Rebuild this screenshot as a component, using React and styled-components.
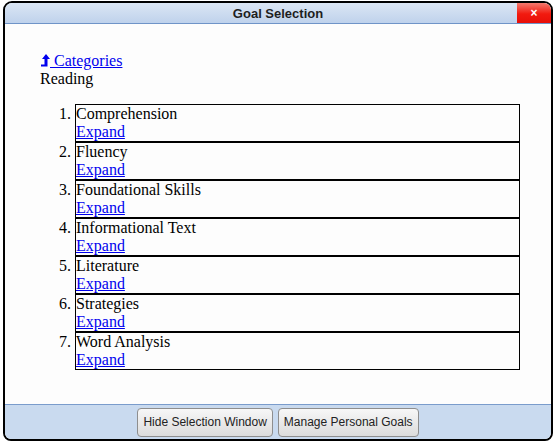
import React from "react";
import styled, { createGlobalStyle } from "styled-components";

const Global = createGlobalStyle`
  html, body { margin: 0; padding: 0; background: #ffffff; }
  body { font-family: "Liberation Serif", "Times New Roman", serif; font-size: 16px; }
`;

const Window = styled.div`
  box-sizing: border-box;
  margin: 1px 0 0 3px;
  width: 550px;
  height: 440px;
  border: 2px solid #000;
  border-radius: 9px 9px 8px 8px;
  overflow: hidden;
  display: flex;
  flex-direction: column;
  background: #fdfdfd;
`;

const TitleBar = styled.div`
  position: relative;
  height: 20px;
  flex: none;
  background: linear-gradient(#dbe6f4, #bfd2ec);
  border-bottom: 1px solid #6f94c8;
  display: flex;
  align-items: center;
  justify-content: center;
  font-family: "Liberation Sans", Arial, sans-serif;
  font-weight: bold;
  font-size: 13px;
  color: #1e1e1e;
`;

const Close = styled.div`
  position: absolute;
  right: 0;
  top: 0;
  width: 34px;
  height: 20px;
  background: linear-gradient(#f47a6e, #f21a0f 55%, #e80f08);
  color: #fff;
  font-size: 12px;
  font-weight: bold;
  display: flex;
  align-items: center;
  justify-content: center;
`;

const Body = styled.div`
  flex: 1;
  padding: 28px 31px 0 35px;
  color: #000;
`;

const Line = styled.div`
  line-height: 18px;
`;

const Link = styled.a`
  color: #0000ee;
  text-decoration: underline;
  cursor: pointer;
`;

const List = styled.ol`
  margin: 16px 0 0;
  padding-left: 35px;
`;

const Item = styled.li`
  border: 1px solid #000;
  line-height: 18px;
  padding-left: 0;
`;

const Footer = styled.div`
  flex: none;
  height: 34px;
  border-top: 1px solid #7a9ccc;
  background: #c9daef;
  display: flex;
  align-items: center;
  justify-content: center;
  gap: 5px;
`;

const Button = styled.button`
  box-sizing: border-box;
  height: 29px;
  padding: 0 5px;
  border: 1px solid #8e8e8e;
  border-radius: 4px;
  background: linear-gradient(#f7f7f7, #dcdcdc);
  font-family: "Liberation Sans", Arial, sans-serif;
  font-size: 12px;
  color: #222;
`;

const Arrow = () => (
  <svg width="10" height="13" viewBox="0 0 10 13" style={{ verticalAlign: "-1px" }}>
    <path d="M6 0 L10 5 L7.5 5 L7.5 12.5 L1 12.5 L1 10.5 L4.5 10.5 L4.5 5 L2 5 Z" fill="#0000ee" />
  </svg>
);

const items = [
  "Comprehension",
  "Fluency",
  "Foundational Skills",
  "Informational Text",
  "Literature",
  "Strategies",
  "Word Analysis",
];

export default function App() {
  return (
    <>
      <Global />
      <Window>
        <TitleBar>
          Goal Selection
          <Close>×</Close>
        </TitleBar>
        <Body>
          <Line>
            <Link><Arrow /> Categories</Link>
          </Line>
          <Line>Reading</Line>
          <List>
            {items.map((t) => (
              <Item key={t}>
                <div>{t}</div>
                <Link>Expand</Link>
              </Item>
            ))}
          </List>
        </Body>
        <Footer>
          <Button>Hide Selection Window</Button>
          <Button>Manage Personal Goals</Button>
        </Footer>
      </Window>
    </>
  );
}
